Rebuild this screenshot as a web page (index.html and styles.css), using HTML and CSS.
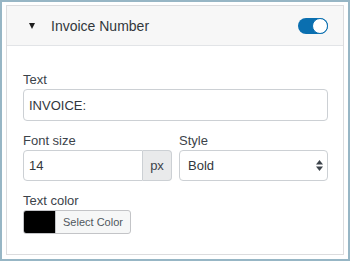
FILE: index.html
```html
<!DOCTYPE html>
<html>
<head>
    <title>Invoice Number</title>
    <link rel="stylesheet" href="styles.css">
</head>
<body>
    <div class="frame">
        <div class="panel">
            <div class="panel-header">
                <span class="caret"></span>
                <span class="panel-title">Invoice Number</span>
                <label class="toggle">
                    <input type="checkbox" checked>
                    <span class="track"></span>
                </label>
            </div>

            <div class="panel-body">
                <div class="field">
                    <label for="invoiceText">Text</label>
                    <input type="text" id="invoiceText" class="text-input" value="INVOICE:">
                </div>

                <div class="field-row">
                    <div class="field">
                        <label for="fontSize">Font size</label>
                        <div class="input-group">
                            <input type="text" id="fontSize" class="text-input" value="14">
                            <span class="addon">px</span>
                        </div>
                    </div>
                    <div class="field">
                        <label for="fontStyle">Style</label>
                        <div class="select-wrap">
                            <select id="fontStyle" class="select">
                                <option>Normal</option>
                                <option selected>Bold</option>
                                <option>Italic</option>
                            </select>
                            <svg class="select-arrows" width="7" height="11" viewBox="0 0 7 11">
                                <path d="M3.5 0 L7 4.5 L0 4.5 Z" fill="#3c434a"/>
                                <path d="M0 6.5 L7 6.5 L3.5 11 Z" fill="#3c434a"/>
                            </svg>
                        </div>
                    </div>
                </div>

                <div class="field">
                    <label>Text color</label>
                    <button class="color-picker">
                        <span class="swatch"></span>
                        <span class="color-label">Select Color</span>
                    </button>
                </div>
            </div>
        </div>
    </div>
</body>
</html>
```

FILE: styles.css
```css
html, body {
    margin: 0;
    padding: 0;
}
body {
    font-family: "Liberation Sans", Arial, sans-serif;
    color: #32373c;
    background: #fff;
}
.frame {
    height: 261px;
    box-sizing: border-box;
    border: 2px solid #97b6c5;
    padding: 3px 4px 4px 4px;
}
.panel {
    height: 250px;
    box-sizing: border-box;
    border: 1px solid #dcdcde;
    background: #fff;
}
.panel-header {
    height: 40px;
    box-sizing: border-box;
    display: flex;
    align-items: center;
    padding: 0 15px 0 22px;
    background: #f7f7f7;
    border-bottom: 1px solid #e2e4e7;
}
.caret {
    width: 0;
    height: 0;
    border-left: 3.5px solid transparent;
    border-right: 3.5px solid transparent;
    border-top: 6px solid #1e1e1e;
    margin-top: 1px;
}
.panel-title {
    margin-left: 16px;
    font-size: 14px;
    color: #32373c;
    flex: 1;
}
.toggle {
    position: relative;
    width: 30px;
    height: 16px;
    cursor: pointer;
}
.toggle input {
    display: none;
}
.track {
    display: block;
    width: 30px;
    height: 16px;
    border-radius: 8px;
    background: #0a6fb0;
    box-sizing: border-box;
}
.track::after {
    content: "";
    position: absolute;
    right: 0;
    top: 0;
    width: 16px;
    height: 16px;
    box-sizing: border-box;
    border-radius: 50%;
    background: #fff;
    border: 1px solid #0a6fb0;
}
.panel-body {
    padding: 25px 15px 0 16px;
}
.field {
    margin-bottom: 11px;
}
.field label {
    display: block;
    font-size: 13px;
    line-height: 17px;
    margin-bottom: 1px;
    color: #3c434a;
}
.text-input {
    display: block;
    width: 100%;
    height: 32px;
    box-sizing: border-box;
    border: 1px solid #ccd0d4;
    border-radius: 4px;
    padding: 0 5px;
    font-family: inherit;
    font-size: 13px;
    color: #32373c;
    background: #fff;
}
.field-row {
    display: grid;
    grid-template-columns: 149px 1fr;
    gap: 7px;
}
.input-group {
    display: flex;
    height: 31px;
}
.input-group .text-input {
    height: 31px;
    border-radius: 4px 0 0 4px;
    flex: 1;
    min-width: 0;
}
.addon {
    width: 29px;
    box-sizing: border-box;
    display: flex;
    align-items: center;
    justify-content: center;
    font-size: 13px;
    color: #3c434a;
    background: #e9eaeb;
    border: 1px solid #ccd0d4;
    border-left: none;
    border-radius: 0 4px 4px 0;
}
.select-wrap {
    position: relative;
}
.select {
    display: block;
    width: 100%;
    height: 31px;
    box-sizing: border-box;
    border: 1px solid #ccd0d4;
    border-radius: 4px;
    padding: 0 8px;
    font-family: inherit;
    font-size: 13px;
    color: #32373c;
    background: #fff;
    appearance: none;
    -webkit-appearance: none;
}
.select-arrows {
    position: absolute;
    right: 5px;
    top: 10px;
    pointer-events: none;
}
.color-picker {
    display: flex;
    align-items: stretch;
    height: 24px;
    padding: 0;
    margin-top: 0;
    border: 1px solid #c3c4c7;
    border-radius: 3px;
    background: #f6f7f7;
    overflow: hidden;
    cursor: pointer;
    font-family: inherit;
}
.swatch {
    width: 31px;
    background: #000;
    border-right: 1px solid #c3c4c7;
}
.color-label {
    display: flex;
    align-items: center;
    padding: 0 7px;
    font-size: 11px;
    color: #50575e;
}
```
